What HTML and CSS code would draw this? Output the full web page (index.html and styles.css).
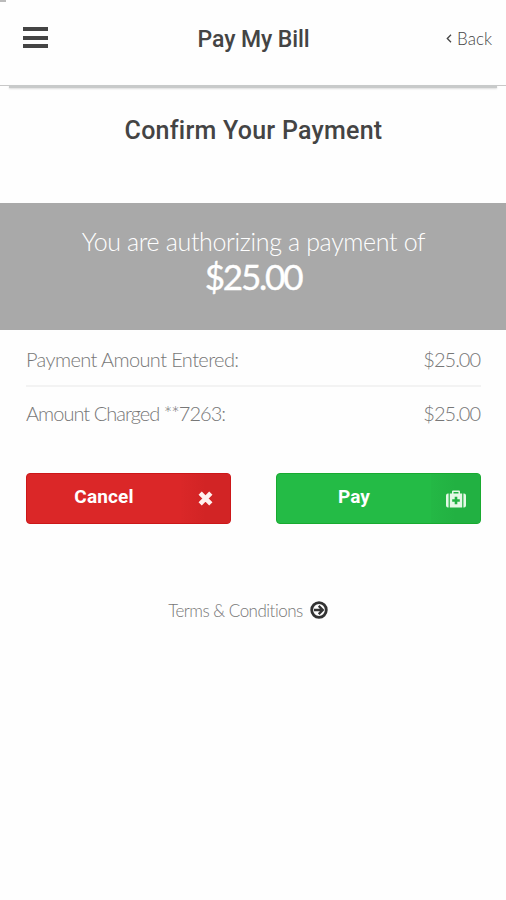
FILE: index.html
```html
<!DOCTYPE html>
<html lang="en">
<head>
<meta charset="utf-8">
<title>Pay My Bill</title>
<link rel="stylesheet" href="styles.css">
</head>
<body>
<header class="bar">
  <span class="corner"></span>
  <button class="menu" aria-label="Menu"><i></i><i></i><i></i></button>
  <h1 class="title">Pay My Bill</h1>
  <a class="back"><svg width="6" height="9" viewBox="0 0 6 9"><path d="M5 .8 1.3 4.5 5 8.2" fill="none" stroke="#444" stroke-width="1.3"/></svg><span>Back</span></a>
</header>
<main>
  <h2 class="heading">Confirm Your Payment</h2>
  <section class="banner">
    <p class="lead">You are authorizing a payment of</p>
    <p class="amount">$25.00</p>
  </section>
  <dl class="rows">
    <div class="row"><dt class="entered">Payment Amount Entered:</dt><dd>$25.00</dd></div>
    <div class="row"><dt class="charged">Amount Charged **7263:</dt><dd>$25.00</dd></div>
  </dl>
  <div class="actions">
    <button class="btn cancel"><span class="label">Cancel</span><span class="icon"><svg width="17" height="17" viewBox="0 0 14 14"><path d="M2.6 2.6 11.4 11.4M11.4 2.6 2.6 11.4" stroke="#fff0ee" stroke-width="3.8"/></svg></span></button>
    <button class="btn pay"><span class="label">Pay</span><span class="icon"><svg width="20" height="18" viewBox="0 0 20 18"><path fill="#e4f8e6" fill-rule="evenodd" d="M2.6 3.600v14H2a2 2 0 0 1-2-2v-10a2 2 0 0 1 2-2zM17.400 3.600v14h.6a2 2 0 0 0 2-2v-10a2 2 0 0 0-2-2zM3.800 3.600H6V1.800C6 1 6.600.5 7.300.5h5.400C13.400.5 14 1 14 1.800v1.800h2.200v14H3.800zM7.500 2v1.600h5V2zM8.700 6.700v2.500H6.200v2.600h2.500v2.500h2.600v-2.500h2.500V9.200h-2.500V6.700z"/></svg></span></button>
  </div>
  <a class="terms"><span>Terms &amp; Conditions</span><svg width="18" height="18" viewBox="0 0 18 18"><circle cx="9" cy="9" r="7.300" fill="none" stroke="#333" stroke-width="2.800"/><path d="M4 9h8.500M8.700 4.900 12.800 9l-4.100 4.100" fill="none" stroke="#333" stroke-width="2.300"/></svg></a>
</main>
</body>
</html>
```
FILE: styles.css
```css
* { box-sizing: border-box; margin: 0; }
body { background: #fefefe; color: #777; font-family: "Lato", sans-serif; font-weight: 300; }
button { border: 0; padding: 0; background: none; font: inherit; }
.bar { position: relative; height: 86px; display: grid; grid-template-columns: 100px 1fr 100px; padding-top: 25px; border-bottom: 1px solid #c8c8c8; }
.bar::after { content: ""; position: absolute; left: 9px; right: 9px; bottom: -3px; height: 3px; background: #c8caca; box-shadow: 0 1px 2px #ddd; }
.corner { position: absolute; top: 0; left: 0; width: 6px; height: 2px; background: #bbb; }
.menu { display: flex; flex-direction: column; gap: 4.500px; align-self: start; margin: 2px 0 0 23px; }
.menu i { width: 25px; height: 4px; background: #444; }
.title, .heading { font-family: "Roboto", sans-serif; font-weight: 500; color: #444; text-align: center; white-space: nowrap; }
.title { font-size: 23px; line-height: 30px; letter-spacing: -.1px; padding-left: 1px; }
.back { display: flex; justify-content: flex-end; align-items: center; gap: 5px; height: 26px; padding-right: 14px; color: #444; font-size: 17px; }
.heading { font-size: 25px; line-height: 30px; padding: 30px 0 0 1px; height: 117px; letter-spacing: .25px; }
.banner { height: 127px; padding-top: 22px; background: #a9a9a9; color: #fff; text-align: center; }
.lead { font-size: 25px; line-height: 32px; white-space: nowrap; letter-spacing: -.35px; padding-left: 1px; }
.amount { font-size: 35px; font-weight: 400; line-height: 38px; letter-spacing: -2.200px; -webkit-text-stroke: .4px #fff; }
.rows { padding: 3px 25px 0 26px; }
.row { display: flex; justify-content: space-between; height: 52px; line-height: 52px; font-size: 20px; letter-spacing: -1px; }
.entered { letter-spacing: -.6px; }
.charged { letter-spacing: -.97px; }
.row dd { margin-right: 1px; }
.row + .row { border-top: 2px solid #f3f3f3; }
.actions { display: grid; grid-template-columns: 205px 205px; justify-content: space-between; padding: 36px 25px 0 26px; }
.btn { display: flex; height: 51px; border-radius: 4px; overflow: hidden; color: #fff; font: 700 19px "Roboto", sans-serif; }
.label { flex: 1; align-self: center; text-align: center; padding-bottom: 4px; letter-spacing: .15px; }
.icon { width: 49px; height: 100%; display: flex; align-items: center; justify-content: center; }
.cancel { background: #db2728; border: 1px solid #cc1719; }
.cancel .icon { background: linear-gradient(90deg, #da2728, #d22425 50%); }
.pay { background: #24bb46; border: 1px solid #18aa30; }
.pay .icon { background: linear-gradient(90deg, #24b845, #22b142 50%); }
.terms { display: flex; justify-content: center; align-items: center; gap: 7px; margin-top: 74px; height: 24px; padding-right: 10px; font-size: 17px; letter-spacing: -.5px; }
```
